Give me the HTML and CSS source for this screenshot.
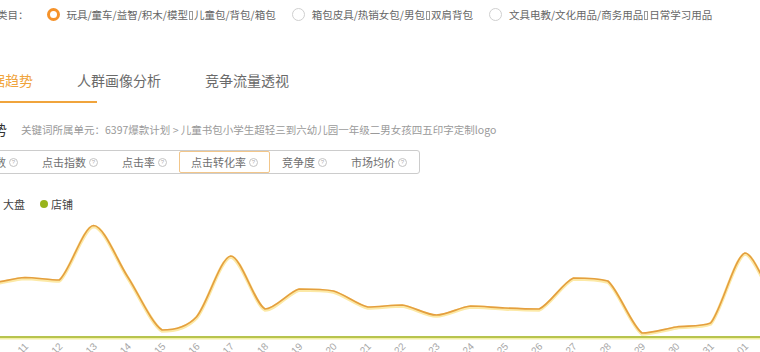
FILE: index.html
```html
<!DOCTYPE html>
<html lang="zh-CN">
<head>
<meta charset="utf-8">
<title>数据趋势</title>
<link rel="stylesheet" href="styles.css">
</head>
<body>
<div class="page">
  <div class="cat-row">
    <span class="cat-label">类目：</span>
    <label class="opt"><span class="radio checked"></span><span class="opt-text">玩具/童车/益智/积木/模型<span class="tofu"></span>儿童包/背包/箱包</span></label>
    <label class="opt"><span class="radio"></span><span class="opt-text">箱包皮具/热销女包/男包<span class="tofu"></span>双肩背包</span></label>
    <label class="opt"><span class="radio"></span><span class="opt-text">文具电教/文化用品/商务用品<span class="tofu"></span>日常学习用品</span></label>
  </div>

  <div class="tabs">
    <div class="tab-list">
      <span class="tab active">数据趋势</span>
      <span class="tab">人群画像分析</span>
      <span class="tab">竞争流量透视</span>
    </div>
    <div class="ink"></div>
  </div>

  <div class="crumb-row">
    <span class="section-title">数据趋势</span>
    <span class="crumb">关键词所属单元：6397爆款计划 &gt; 儿童书包小学生超轻三到六幼儿园一年级二男女孩四五印字定制logo</span>
  </div>

  <div class="metrics">
    <span class="metric">展现指数<i class="help">?</i></span>
    <span class="metric">点击指数<i class="help">?</i></span>
    <span class="metric">点击率<i class="help">?</i></span>
    <span class="metric active">点击转化率<i class="help">?</i></span>
    <span class="metric">竞争度<i class="help">?</i></span>
    <span class="metric">市场均价<i class="help">?</i></span>
  </div>

  <div class="legend">
    <span class="legend-item"><span class="dot dot-market"></span>大盘</span>
    <span class="legend-item"><span class="dot dot-shop"></span>店铺</span>
  </div>

  <svg class="chart" width="760" height="138" viewBox="0 0 760 138">
    <line class="base-glow" x1="0" y1="124.6" x2="760" y2="124.6"/>
    <line class="base" x1="0" y1="123" x2="760" y2="123"/>
    <path class="line-glow" transform="translate(0 1)" d="M-9.3 69 C1 68.2 14.7 64 25 63.5 C35.3 63.5 49 66 59.3 66 C69.6 58.2 83.3 12 93.6 11.5 C103.9 11.5 117.5 47.3 127.8 63 C138.1 78.7 151.8 110 162.1 116 C172.4 116 186.1 114.1 196.4 103 C206.7 91.9 220.4 43.2 230.7 42 C241 42 254.7 90 265 95 C275.3 95 288.9 77.7 299.2 75 C309.5 75 323.2 75 333.5 77 C343.8 79.7 357.5 90.9 367.8 93 C378.1 93 391.8 91 402.1 91 C412.4 92.2 426.1 100.9 436.4 101 C446.7 101 460.3 93 470.6 92 C480.9 92 494.6 93.6 504.9 94 C515.2 94.5 528.9 95 539.2 95 C549.5 90.5 563.2 68.2 573.5 64 C583.8 64 597.5 64 607.8 67 C618.1 75.3 631.7 112.1 642 119 C652.3 119 666 114.5 676.3 113 C686.6 111.5 700.3 113 710.6 109 C720.9 97.9 734.6 42.5 744.9 39 C755.2 39 768.9 86 779.2 86"/>
    <path class="line" d="M-9.3 69 C1 68.2 14.7 64 25 63.5 C35.3 63.5 49 66 59.3 66 C69.6 58.2 83.3 12 93.6 11.5 C103.9 11.5 117.5 47.3 127.8 63 C138.1 78.7 151.8 110 162.1 116 C172.4 116 186.1 114.1 196.4 103 C206.7 91.9 220.4 43.2 230.7 42 C241 42 254.7 90 265 95 C275.3 95 288.9 77.7 299.2 75 C309.5 75 323.2 75 333.5 77 C343.8 79.7 357.5 90.9 367.8 93 C378.1 93 391.8 91 402.1 91 C412.4 92.2 426.1 100.9 436.4 101 C446.7 101 460.3 93 470.6 92 C480.9 92 494.6 93.6 504.9 94 C515.2 94.5 528.9 95 539.2 95 C549.5 90.5 563.2 68.2 573.5 64 C583.8 64 597.5 64 607.8 67 C618.1 75.3 631.7 112.1 642 119 C652.3 119 666 114.5 676.3 113 C686.6 111.5 700.3 113 710.6 109 C720.9 97.9 734.6 42.5 744.9 39 C755.2 39 768.9 86 779.2 86"/>
    <g class="xlabels">
      <text x="29" y="133" transform="rotate(-45 29 133)">11</text>
      <text x="63.3" y="133" transform="rotate(-45 63.3 133)">12</text>
      <text x="97.6" y="133" transform="rotate(-45 97.6 133)">13</text>
      <text x="131.8" y="133" transform="rotate(-45 131.8 133)">14</text>
      <text x="166.1" y="133" transform="rotate(-45 166.1 133)">15</text>
      <text x="200.4" y="133" transform="rotate(-45 200.4 133)">16</text>
      <text x="234.7" y="133" transform="rotate(-45 234.7 133)">17</text>
      <text x="269" y="133" transform="rotate(-45 269 133)">18</text>
      <text x="303.2" y="133" transform="rotate(-45 303.2 133)">19</text>
      <text x="337.5" y="133" transform="rotate(-45 337.5 133)">20</text>
      <text x="371.8" y="133" transform="rotate(-45 371.8 133)">21</text>
      <text x="406.1" y="133" transform="rotate(-45 406.1 133)">22</text>
      <text x="440.4" y="133" transform="rotate(-45 440.4 133)">23</text>
      <text x="474.6" y="133" transform="rotate(-45 474.6 133)">24</text>
      <text x="508.9" y="133" transform="rotate(-45 508.9 133)">25</text>
      <text x="543.2" y="133" transform="rotate(-45 543.2 133)">26</text>
      <text x="577.5" y="133" transform="rotate(-45 577.5 133)">27</text>
      <text x="611.8" y="133" transform="rotate(-45 611.8 133)">28</text>
      <text x="646" y="133" transform="rotate(-45 646 133)">29</text>
      <text x="680.3" y="133" transform="rotate(-45 680.3 133)">30</text>
      <text x="714.6" y="133" transform="rotate(-45 714.6 133)">31</text>
      <text x="748.9" y="133" transform="rotate(-45 748.9 133)">01</text>
    </g>
  </svg>
</div>
</body>
</html>
```

FILE: styles.css
```css
html, body {
  margin: 0;
  padding: 0;
  background: #ffffff;
}

body {
  width: 760px;
  height: 352px;
  overflow: hidden;
  font-family: "Noto Sans CJK SC", "Noto Sans", sans-serif;
  color: #666;
}

.page {
  width: 760px;
}

/* category row */
.cat-row {
  display: flex;
  align-items: center;
  height: 28px;
  margin-left: -3px;
  font-size: 10.5px;
  color: #666;
  white-space: nowrap;
}

.cat-label {
  margin-right: 18px;
}

.opt {
  display: flex;
  align-items: center;
  margin-right: 16px;
}

.radio {
  width: 13px;
  height: 13px;
  box-sizing: border-box;
  border-radius: 50%;
  border: 1px solid #cfcfcf;
  background: #fff;
  margin-right: 7px;
  flex: none;
}

.radio.checked {
  border: 3.5px solid #f5922a;
}

.tofu {
  display: inline-block;
  width: 4px;
  height: 9px;
  box-sizing: border-box;
  border: 1px solid #9a9a9a;
  margin: 0 1px;
  vertical-align: -1px;
}

/* tabs */
.tabs {
  padding-top: 42px;
}

.tab-list {
  display: flex;
  gap: 44px;
  margin-left: -23px;
  font-size: 14px;
  line-height: 20px;
  padding-bottom: 11px;
  white-space: nowrap;
}

.tab {
  color: #6a6a6a;
}

.tab.active {
  color: #f0a43c;
}

.ink {
  width: 97px;
  height: 2px;
  background: #f0a43c;
}

/* breadcrumb */
.crumb-row {
  display: flex;
  align-items: center;
  height: 20px;
  margin-top: 16px;
  margin-left: -49px;
  white-space: nowrap;
}

.section-title {
  font-size: 14px;
  color: #333;
  margin-right: 14px;
}

.crumb {
  font-size: 10.5px;
  color: #9a9a9a;
}

/* metric switcher */
.metrics {
  display: flex;
  width: fit-content;
  height: 24px;
  box-sizing: border-box;
  margin-top: 11px;
  margin-left: -51px;
  border: 1px solid #cccccc;
  border-radius: 3px;
  white-space: nowrap;
}

.metric {
  display: flex;
  align-items: center;
  height: 22px;
  box-sizing: border-box;
  padding: 0 12px;
  font-size: 11px;
  color: #707070;
}

.metric.active {
  border: 1px solid #f2c68a;
  border-radius: 2px;
  padding: 0 11px;
}

.help {
  display: inline-block;
  width: 9px;
  height: 9px;
  box-sizing: border-box;
  border: 1px solid #c4c4c4;
  border-radius: 50%;
  margin-left: 3px;
  font-style: normal;
  font-family: "Liberation Sans", sans-serif;
  font-size: 6px;
  line-height: 7px;
  text-align: center;
  color: #b0b0b0;
}

/* legend */
.legend {
  display: flex;
  align-items: center;
  height: 20px;
  margin-top: 20px;
  margin-left: -8px;
  font-size: 11px;
  white-space: nowrap;
}

.legend-item {
  display: flex;
  align-items: center;
  margin-right: 15px;
  color: #444;
}

.dot {
  width: 8px;
  height: 8px;
  border-radius: 50%;
  margin-right: 3px;
}

.dot-market {
  background: #e9a23f;
}

.dot-shop {
  background: #98b41b;
}

/* chart */
.chart {
  display: block;
  overflow: hidden;
}

.base {
  stroke: #b7c44e;
  stroke-width: 2;
}

.base-glow {
  stroke: #f3f0a6;
  stroke-width: 1.6;
}

.line {
  fill: none;
  stroke: #e49f3f;
  stroke-width: 1.7;
  stroke-linejoin: round;
}

.line-glow {
  fill: none;
  stroke: #fce9a6;
  stroke-width: 3.4;
  stroke-linejoin: round;
}

.xlabels text {
  font-family: "Liberation Sans", sans-serif;
  font-size: 10px;
  fill: #a8a8a8;
  text-anchor: end;
}
```
